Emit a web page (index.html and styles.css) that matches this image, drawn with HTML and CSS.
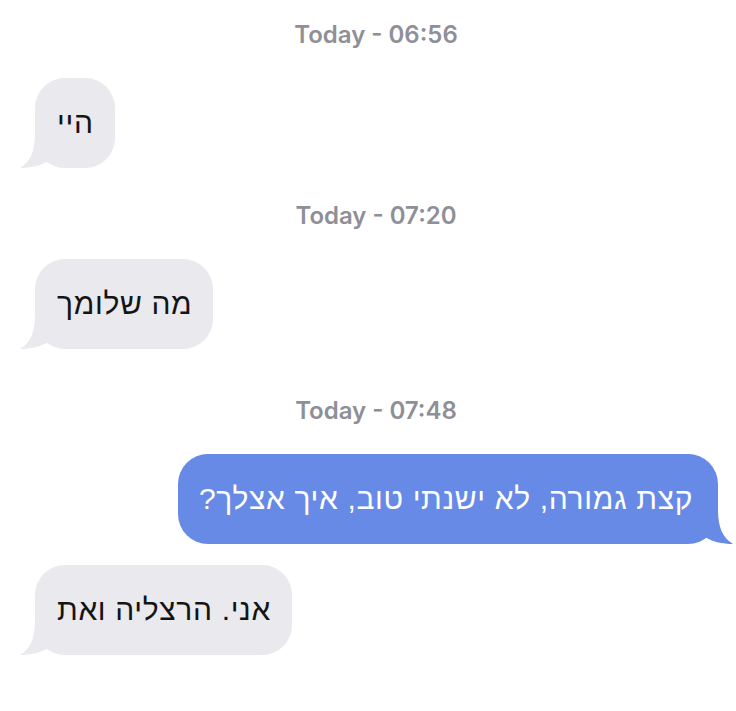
FILE: index.html
```html
<!DOCTYPE html>
<html lang="he">
<head>
<meta charset="utf-8">
<link rel="stylesheet" href="styles.css">
</head>
<body>
<main class="chat">
  <div class="stamp stamp-first">Today - 06:56</div>
  <div class="row in">
    <div class="bubble gray" dir="rtl">היי<svg class="tail" viewBox="0 0 40 34"><path d="M15,0 C15,18 10,28 0,34 C10,34 20,32 28,27 L40,27 L40,0 Z"/></svg></div>
  </div>
  <div class="stamp stamp-second">Today - 07:20</div>
  <div class="row in">
    <div class="bubble gray" dir="rtl">מה שלומך<svg class="tail" viewBox="0 0 40 34"><path d="M15,0 C15,18 10,28 0,34 C10,34 20,32 28,27 L40,27 L40,0 Z"/></svg></div>
  </div>
  <div class="stamp stamp-third">Today - 07:48</div>
  <div class="row out">
    <div class="bubble blue" dir="rtl">קצת גמורה, לא ישנתי טוב, איך אצלך?<svg class="tail" viewBox="0 0 40 34"><path d="M15,0 C15,18 10,28 0,34 C10,34 20,32 28,27 L40,27 L40,0 Z"/></svg></div>
  </div>
  <div class="row in next">
    <div class="bubble gray" dir="rtl">אני. הרצליה ואת<svg class="tail" viewBox="0 0 40 34"><path d="M15,0 C15,18 10,28 0,34 C10,34 20,32 28,27 L40,27 L40,0 Z"/></svg></div>
  </div>
</main>
</body>
</html>
```

FILE: styles.css
```css
html, body {
  margin: 0;
  padding: 0;
  background: #ffffff;
}

.chat {
  display: flex;
  flex-direction: column;
  padding: 20px 18px 0 35px;
  font-family: "Liberation Sans", Arial, sans-serif;
}

.stamp {
  text-align: center;
  color: #8f8f98;
  font-family: Inter, "Liberation Sans", sans-serif;
  font-weight: 600;
  font-size: 24px;
  line-height: 30px;
  height: 30px;
  margin-left: -19px;
  margin-right: -18px;
}

.stamp-first { margin-top: 0; }
.stamp-second { margin-top: 33px; }
.stamp-third { margin-top: 47px; }

.row {
  display: flex;
  margin-top: 28px;
}

.row.in { justify-content: flex-start; }
.row.out { justify-content: flex-end; }
.row.next { margin-top: 21px; }

.bubble {
  position: relative;
  box-sizing: border-box;
  height: 90px;
  padding: 0 21px 0 22px;
  border-radius: 30px;
  font-size: 30px;
  letter-spacing: 0.65px;
  line-height: 90px;
  white-space: nowrap;
}

.gray {
  background: #e9e9ee;
  color: #141414;
}

.gray .tail path { fill: #e9e9ee; }

.blue {
  background: #678ae6;
  color: #ffffff;
  padding: 0 25px 0 21px;
}

.blue .tail path { fill: #678ae6; }

.tail {
  position: absolute;
  bottom: 0;
  width: 40px;
  height: 34px;
}

.gray .tail { left: -15px; }

.blue .tail {
  right: -15px;
  transform: scaleX(-1);
}
```
